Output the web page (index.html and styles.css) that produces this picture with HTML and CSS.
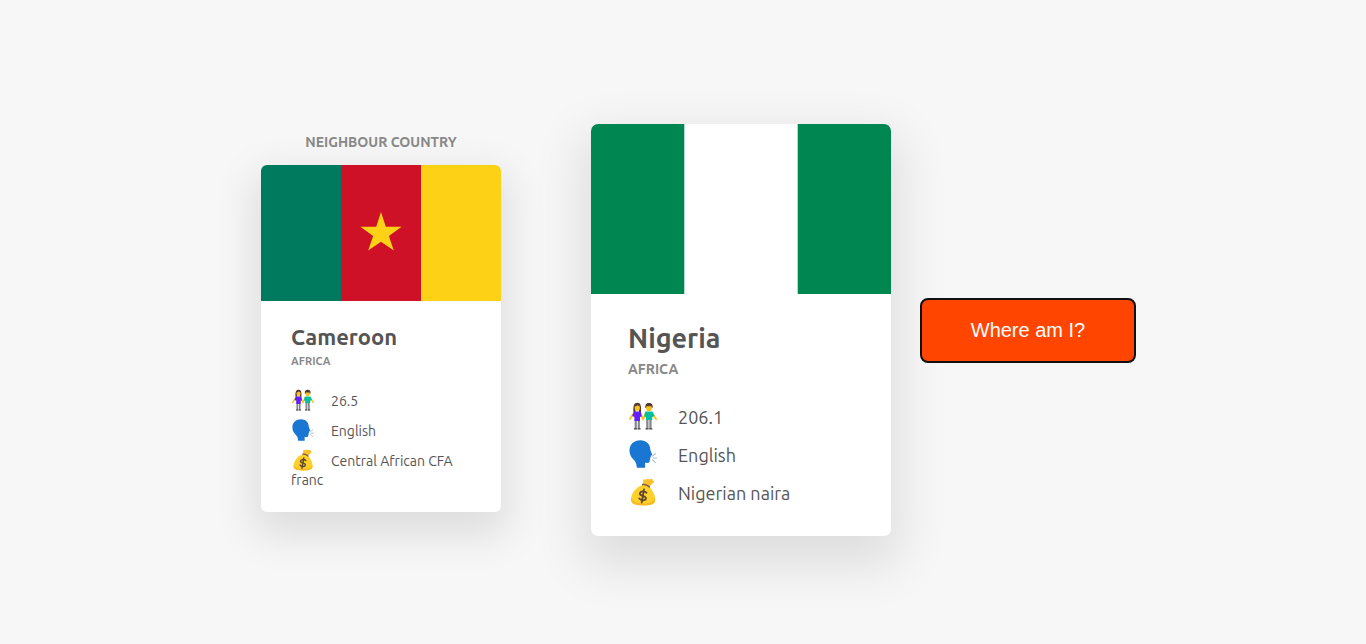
FILE: index.html
```
<!DOCTYPE html>
<html lang="en">
<head>
<meta charset="UTF-8">
<meta name="viewport" content="width=device-width, initial-scale=1">
<title>Where am I?</title>
<link rel="stylesheet" href="styles.css">
</head>
<body>
<svg class="sprite" aria-hidden="true">
  <symbol id="people" viewBox="0 0 28 28">
    <path d="M1 17 5 11M27 17 23 11M11 11l3 6 3-6" fill="none" stroke="#fcc21b" stroke-width="2" stroke-linecap="round"/>
    <path d="M5.600 15h2.200v12H5.600zM8.700 15h2.200v12H8.700zM17.200 15h2.300v12h-2.300zM20.300 15h2.300v12h-2.300z" fill="#85888c"/>
    <path d="M5 26.200h3v1.300H5zM8.600 26.200h3v1.300h-3zM16.500 26.200h3v1.300h-3zM20.300 26.200h3v1.300h-3z" fill="#444"/>
    <path d="M4.800 9.500h7l1 5-1.800.5V19H5.500v-4l-2.300-1z" fill="#651fff"/>
    <path d="M16.300 9.500h7.200l2 4.500-2.300 1v3h-6.200v-3l-1.800-.5z" fill="#00bfa5"/>
    <path d="M4.500 10C4 4 5 .8 8.300.8S12.500 4 12 10H10V6H6.500v4z" fill="#543930"/>
    <ellipse cx="8.300" cy="5.600" rx="2.600" ry="3.300" fill="#fcc21b"/>
    <path d="M16.400 6c-.6-3.500.8-5 3.600-5s4.200 1.500 3.500 5z" fill="#543930"/>
    <ellipse cx="20" cy="5.900" rx="2.900" ry="3.300" fill="#fcc21b"/>
    <path d="M5.800 4.300c1.800 0 2.500-.8 2.800-1.300.4.700 1.200 1.300 2.200 1.300-.2-2-1-2.800-2.500-2.800S6 2.300 5.800 4.300zM17.100 4.500c2-.2 4-.2 5.800 0-.2-2.200-1.200-3-2.900-3s-2.800.8-2.900 3z" fill="#543930"/>
  </symbol>
  <symbol id="speech" viewBox="0 0 28 28">
    <path d="M.5 10.500C.5 4.500 5 .3 11.300.3c5.900 0 9.700 3.500 9.900 8.700.1 1.800 1.500 4.100 1.900 5.300.2.800-.2 1.200-1.400 1.400l.2 1.600-1 .8.600 1-.8.900c.3 2.500-.6 3.300-4.600 2.800v5H7.800c-.1-5.800-2.400-6.800-4.900-10C1.300 15.600.5 13.200.5 10.500z" fill="#1976d2"/>
    <path d="m23.600 16 2.900-2.400M24 18h3.500M23.600 20l2.900 2.400" fill="none" stroke="#b0bec5" stroke-width="1.200" stroke-linecap="round"/>
  </symbol>
  <symbol id="money" viewBox="0 0 28 28">
    <path d="M14 7.200 14.200 3c-.3-1.700 1.700-2.300 2.700-1.100C18 .4 19.700.5 20.200 1.700c1.300-1.500 3.800-1 3.600.7 1.700.4 1.300 2.300-.1 2.900l-3.500 3.500z" fill="#fbc02d"/>
    <path d="M13.500 7C6.800 9 2 15.600 2 21.600 2 26 6 27.300 14 27.300s12.200-1.200 12.200-5.600c0-5-2.700-9.600-6-13z" fill="#fdd02c"/>
    <path d="M2.300 19.500C3 24 8 25.500 14 25.400c6 0 10.300-1 12-5 .8 5-2.500 7-12 7S1.200 25 2.300 19.500z" fill="#f9b924"/>
    <path d="M13.700 6.600c2.300-.3 4.900.6 6.600 2.300" fill="none" stroke="#7d5b3a" stroke-width="1.600" stroke-linecap="round"/>
    <path d="M17.500 14.800c-1.300-2.100-6.200-1.900-6.600.6-.5 3.300 6.500 1.900 6.100 5-.4 2.600-5.300 2.500-6.800 0M15 11.500l-2.300 13" fill="none" stroke="#60452d" stroke-width="1.800" stroke-linecap="round"/>
  </symbol>
</svg>
<main class="container">
  <section class="neighbour">
    <h2 class="neighbour-title">Neighbour country</h2>
    <article class="country country-small">
      <svg class="flag" viewBox="0 0 240 136" role="img" aria-label="Flag of Cameroon">
        <path fill="#007a5e" d="M0 0h80v136H0z"/><path fill="#ce1126" d="M80 0h80v136H80z"/><path fill="#fcd116" d="M160 0h80v136h-80z"/>
        <path fill="#fcd116" d="m120 47 4.800 14.700h15.800L127.900 71l4.900 14.500L120 76.700l-12.800 8.800 4.900-14.500-12.700-9.300h15.800z"/>
      </svg>
      <div class="data">
        <h3 class="name">Cameroon</h3>
        <h4 class="region">Africa</h4>
        <p class="row"><svg class="icon" aria-hidden="true"><use href="#people"/></svg>26.5</p>
        <p class="row"><svg class="icon" aria-hidden="true"><use href="#speech"/></svg>English</p>
        <p class="row"><svg class="icon" aria-hidden="true"><use href="#money"/></svg>Central African CFA franc</p>
      </div>
    </article>
  </section>
  <article class="country">
    <svg class="flag" viewBox="0 0 300 170" role="img" aria-label="Flag of Nigeria">
      <path fill="#fff" d="M0 0h300v170H0z"/><path fill="#008751" d="M0 0h93.300v170H0zM206.700 0H300v170h-93.300z"/>
    </svg>
    <div class="data">
      <h3 class="name">Nigeria</h3>
      <h4 class="region">Africa</h4>
      <p class="row"><svg class="icon" aria-hidden="true"><use href="#people"/></svg>206.1</p>
      <p class="row"><svg class="icon" aria-hidden="true"><use href="#speech"/></svg>English</p>
      <p class="row"><svg class="icon" aria-hidden="true"><use href="#money"/></svg>Nigerian naira</p>
    </div>
  </article>
  <button class="btn-country" type="button">Where am I?</button>
</main>
</body>
</html>
```
FILE: styles.css
```
* { box-sizing: border-box; margin: 0; padding: 0; }

body {
  min-height: 100vh;
  display: flex;
  align-items: center;
  justify-content: center;
  padding-top: 16px;
  background: #f7f7f7;
  color: #555;
  font-family: Ubuntu, "Noto Sans", sans-serif;
}

.sprite { display: none; }

.container {
  display: flex;
  align-items: center;
  gap: 30px;
  padding-left: 30px;
}

.neighbour {
  width: 240px;
  margin-right: 60px;
  padding-bottom: 15px;
}

.neighbour-title {
  margin-bottom: 14px;
  font-size: 14px;
  line-height: 18px;
  text-align: center;
  text-transform: uppercase;
  color: #888;
}

.country {
  width: 300px;
  overflow: hidden;
  border-radius: 7px;
  background: #fff;
  box-shadow: 0 20px 50px 10px rgba(0, 0, 0, 0.1);
  font-size: 18px;
}

.flag { display: block; width: 100%; }

.data { padding: 25px 37px 24px; }

.name { font-size: 27px; line-height: 38px; }

.region {
  margin: 2px 0 19px;
  font-size: 14px;
  line-height: 20px;
  text-transform: uppercase;
  color: #888;
}

.row { line-height: 24px; padding: 4px 0 6px; }

.icon {
  width: 28px;
  height: 28px;
  margin: 0 21px 0 1px;
  vertical-align: -6px;
}

.country-small {
  width: 100%;
  border-radius: 6px;
  box-shadow: 0 16px 40px 8px rgba(0, 0, 0, 0.1);
  font-size: 14px;
}

.country-small .data { padding: 20px 30px 18px; }
.country-small .name { font-size: 22px; line-height: 32px; }
.country-small .region { margin: 0 0 16px; font-size: 11px; line-height: 16px; }
.country-small .row { line-height: 19px; padding: 4px 0; }
.country-small .icon { width: 22px; height: 22px; margin: 0 17px 0 1px; vertical-align: -5px; }

.btn-country {
  width: 214px;
  padding: 20px 30px;
  border: none;
  border-radius: 7px;
  outline: 2px solid #101010;
  outline-offset: -1px;
  background: orangered;
  color: #fff;
  font-family: "Liberation Sans", Arial, sans-serif;
  font-size: 20px;
  line-height: 23px;
  cursor: pointer;
}
```
